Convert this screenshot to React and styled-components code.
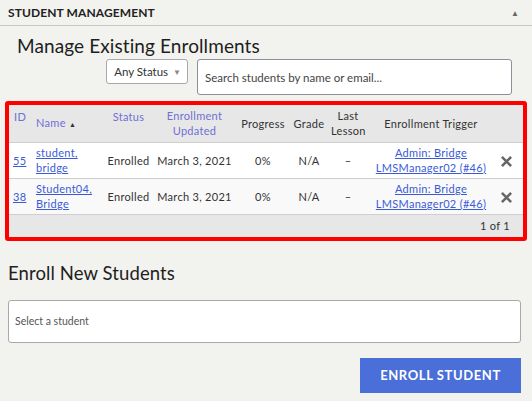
import React from 'react';
import styled, { createGlobalStyle } from 'styled-components';

const GlobalStyle = createGlobalStyle`
  html, body {
    margin: 0;
    padding: 0;
    background: #f2f2ee;
  }
  body {
    font-family: Lato, 'Liberation Sans', sans-serif;
    color: #222;
  }
`;

const Page = styled.div`
  width: 532px;
  height: 401px;
  overflow: hidden;
  background: #f2f2ee;
`;

const PanelHeader = styled.div`
  height: 25px;
  display: flex;
  align-items: center;
  justify-content: space-between;
  padding: 0 13px 0 8px;
  border-bottom: 1px solid #c9c9c9;
  font-size: 12px;
  font-weight: 700;
  letter-spacing: 0.1px;
  color: #222;
`;

const Caret = styled.span`
  font-size: 8px;
  color: #666;
`;

const Title = styled.h2`
  margin: 0;
  padding: 8px 0 0 17px;
  height: 25px;
  font-size: 19px;
  font-weight: 400;
  letter-spacing: 0.1px;
  line-height: 24px;
  color: #1e1e1e;
`;

const FilterRow = styled.div`
  display: flex;
  justify-content: flex-end;
  align-items: flex-start;
  gap: 9px;
  padding: 0 20px 0 0;
`;

const StatusSelect = styled.div`
  height: 25px;
  box-sizing: border-box;
  padding: 0 6px 0 7px;
  display: flex;
  align-items: center;
  gap: 5px;
  background: #fff;
  border: 1px solid #a9a9a9;
  border-radius: 3px;
  font-size: 11.5px;
  color: #333;
`;

const SmallArrow = styled.span`
  font-size: 8px;
  color: #888;
`;

const SearchBox = styled.div`
  width: 315px;
  height: 36px;
  box-sizing: border-box;
  display: flex;
  align-items: center;
  padding: 0 7px;
  background: #fff;
  border: 1px solid #8b9099;
  border-radius: 3px;
  font-size: 11.5px;
  color: #444;
`;

const Highlight = styled.div`
  margin: 6px 5px 0 5px;
  border: 4px solid #ff0000;
  border-radius: 3px;
`;

const Table = styled.table`
  width: 100%;
  table-layout: fixed;
  border-collapse: collapse;
  font-size: 11px;
  letter-spacing: 0.3px;
`;

const Th = styled.th`
  box-sizing: border-box;
  background: #e7e7e7;
  height: 37px;
  padding: 0 3px;
  font-weight: 400;
  line-height: 15px;
  color: ${p => (p.$link ? '#6f6fd6' : '#333')};
  text-align: ${p => p.$align || 'center'};
  vertical-align: ${p => (p.$top ? 'top' : 'middle')};
  padding-top: ${p => (p.$top ? '4px' : '0')};
  padding-left: ${p => p.$pl || '3px'};
  border-bottom: 1px solid #cfcfcf;
  white-space: nowrap;
`;

const Tr = styled.tr`
  background: ${p => (p.$alt ? '#f9f9f9' : '#fff')};
  border-bottom: 1px solid #cfcfcf;
`;

const Td = styled.td`
  box-sizing: border-box;
  height: 36px;
  padding: 0 3px;
  padding-left: ${p => p.$pl || '3px'};
  padding-right: ${p => p.$pr || '3px'};
  text-align: ${p => p.$align || 'center'};
  line-height: 15px;
  color: #333;
  white-space: nowrap;
`;

const A = styled.a`
  color: #3b5bd6;
  text-decoration: underline;
  cursor: pointer;
`;

const Remove = styled.span`
  display: inline-flex;
  vertical-align: middle;
`;

const Footer = styled.div`
  height: 22px;
  background: #e7e7e7;
  display: flex;
  align-items: center;
  justify-content: flex-end;
  padding-right: 13px;
  font-size: 11px;
  color: #333;
  letter-spacing: 0.3px;
`;

const SubTitle = styled.h2`
  margin: 0;
  padding: 20px 0 0 8px;
  font-size: 18.5px;
  font-weight: 400;
  letter-spacing: 0.1px;
  line-height: 24px;
  color: #1e1e1e;
`;

const StudentPicker = styled.div`
  margin: 15px 11px 0 8px;
  height: 43px;
  box-sizing: border-box;
  display: flex;
  align-items: center;
  padding: 0 6px;
  background: #fff;
  border: 1px solid #a9a9a9;
  border-radius: 3px;
  font-size: 10.5px;
  color: #555;
`;

const Actions = styled.div`
  display: flex;
  justify-content: flex-end;
  padding: 15px 11px 0 0;
`;

const Button = styled.button`
  width: 161px;
  height: 35px;
  border: none;
  background: #4a6fd9;
  color: #fff;
  font-family: inherit;
  font-size: 13px;
  font-weight: 700;
  letter-spacing: 0.6px;
`;

const XIcon = () => (
  <svg width="11" height="11" viewBox="0 0 12 12">
    <path d="M2 2 L10 10 M10 2 L2 10" stroke="#666" strokeWidth="2.8" strokeLinecap="square" />
  </svg>
);

const columns = [24, 71, 49, 83, 54, 38, 40, 126, 29];

const rows = [
  { id: 55, last: 'student,', first: 'bridge' },
  { id: 38, last: 'Student04,', first: 'Bridge' },
];

export default function App() {
  return (
    <Page>
      <GlobalStyle />
      <PanelHeader>
        STUDENT MANAGEMENT
        <Caret>▲</Caret>
      </PanelHeader>
      <Title>Manage Existing Enrollments</Title>
      <FilterRow>
        <StatusSelect>
          Any Status <SmallArrow>▼</SmallArrow>
        </StatusSelect>
        <SearchBox>Search students by name or email...</SearchBox>
      </FilterRow>
      <Highlight>
        <Table>
          <colgroup>
            {columns.map((w, i) => (
              <col key={i} style={{ width: w }} />
            ))}
          </colgroup>
          <thead>
            <tr>
              <Th $link $top $align="left" $pl="5px">ID</Th>
              <Th $link $align="left">
                Name <span style={{ fontSize: 7, color: '#333' }}>▲</span>
              </Th>
              <Th $link $top>Status</Th>
              <Th $link>
                Enrollment
                <br />
                Updated
              </Th>
              <Th>Progress</Th>
              <Th>Grade</Th>
              <Th>
                Last
                <br />
                Lesson
              </Th>
              <Th>Enrollment Trigger</Th>
              <Th />
            </tr>
          </thead>
          <tbody>
            {rows.map((r, i) => (
              <Tr key={r.id} $alt={i % 2 === 1}>
                <Td $align="left" $pl="4px">
                  <A>{r.id}</A>
                </Td>
                <Td $align="left">
                  <A>
                    {r.last}
                    <br />
                    {r.first}
                  </A>
                </Td>
                <Td>Enrolled</Td>
                <Td>March 3, 2021</Td>
                <Td>0%</Td>
                <Td>N/A</Td>
                <Td>–</Td>
                <Td>
                  <A>
                    Admin: Bridge
                    <br />
                    LMSManager02 (#46)
                  </A>
                </Td>
                <Td $pr="8px">
                  <Remove>
                    <XIcon />
                  </Remove>
                </Td>
              </Tr>
            ))}
          </tbody>
        </Table>
        <Footer>1 of 1</Footer>
      </Highlight>
      <SubTitle>Enroll New Students</SubTitle>
      <StudentPicker>Select a student</StudentPicker>
      <Actions>
        <Button>ENROLL STUDENT</Button>
      </Actions>
    </Page>
  );
}
